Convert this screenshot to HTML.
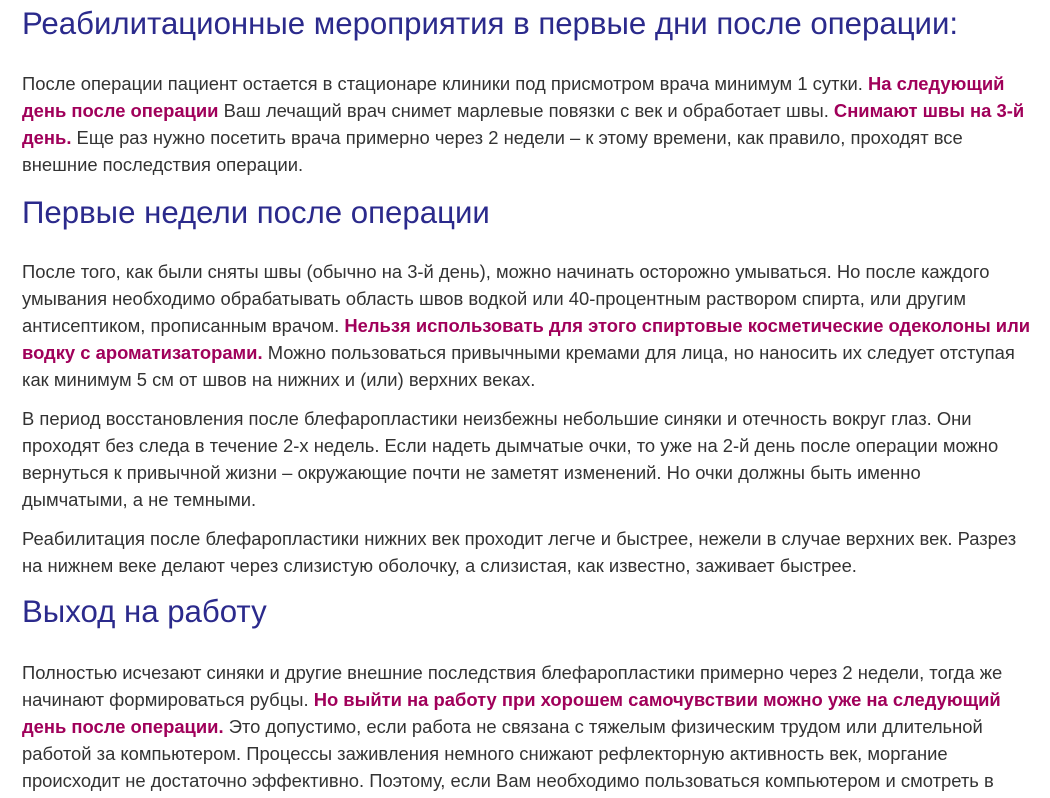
<!DOCTYPE html>
<html><head><meta charset="utf-8"><style>
body{margin:0;background:#fff;width:1050px;height:798px;overflow:hidden;font-family:"Liberation Sans","DejaVu Sans",sans-serif;}
.l{position:absolute;left:22px;white-space:nowrap;font-size:18.4px;color:#333;line-height:27px;}
.h{position:absolute;left:22px;white-space:nowrap;font-size:31.2px;color:#2b2a8c;line-height:40px;}
b{color:#a0005a;}
</style></head><body>
<div class="h" style="top:4px">Реабилитационные мероприятия в первые дни после операции:</div>
<div class="l" style="top:70px">После операции пациент остается в стационаре клиники под присмотром врача минимум 1 сутки. <b>На следующий</b></div>
<div class="l" style="top:97px"><b>день после операции</b> Ваш лечащий врач снимет марлевые повязки с век и обработает швы. <b>Снимают швы на 3-й</b></div>
<div class="l" style="top:124px"><b>день.</b> Еще раз нужно посетить врача примерно через 2 недели – к этому времени, как правило, проходят все</div>
<div class="l" style="top:151px">внешние последствия операции.</div>
<div class="h" style="top:193px">Первые недели после операции</div>
<div class="l" style="top:258px">После того, как были сняты швы (обычно на 3-й день), можно начинать осторожно умываться. Но после каждого</div>
<div class="l" style="top:285px">умывания необходимо обрабатывать область швов водкой или 40-процентным раствором спирта, или другим</div>
<div class="l" style="top:312px">антисептиком, прописанным врачом. <b>Нельзя использовать для этого спиртовые косметические одеколоны или</b></div>
<div class="l" style="top:339px"><b>водку с ароматизаторами.</b> Можно пользоваться привычными кремами для лица, но наносить их следует отступая</div>
<div class="l" style="top:366px">как минимум 5 см от швов на нижних и (или) верхних веках.</div>
<div class="l" style="top:405px">В период восстановления после блефаропластики неизбежны небольшие синяки и отечность вокруг глаз. Они</div>
<div class="l" style="top:432px">проходят без следа в течение 2-х недель. Если надеть дымчатые очки, то уже на 2-й день после операции можно</div>
<div class="l" style="top:459px">вернуться к привычной жизни – окружающие почти не заметят изменений. Но очки должны быть именно</div>
<div class="l" style="top:486px">дымчатыми, а не темными.</div>
<div class="l" style="top:525px">Реабилитация после блефаропластики нижних век проходит легче и быстрее, нежели в случае верхних век. Разрез</div>
<div class="l" style="top:552px">на нижнем веке делают через слизистую оболочку, а слизистая, как известно, заживает быстрее.</div>
<div class="h" style="top:592px">Выход на работу</div>
<div class="l" style="top:659px">Полностью исчезают синяки и другие внешние последствия блефаропластики примерно через 2 недели, тогда же</div>
<div class="l" style="top:686px">начинают формироваться рубцы. <b>Но выйти на работу при хорошем самочувствии можно уже на следующий</b></div>
<div class="l" style="top:713px"><b>день после операции.</b> Это допустимо, если работа не связана с тяжелым физическим трудом или длительной</div>
<div class="l" style="top:740px">работой за компьютером. Процессы заживления немного снижают рефлекторную активность век, моргание</div>
<div class="l" style="top:767px">происходит не достаточно эффективно. Поэтому, если Вам необходимо пользоваться компьютером и смотреть в</div>
</body></html>
